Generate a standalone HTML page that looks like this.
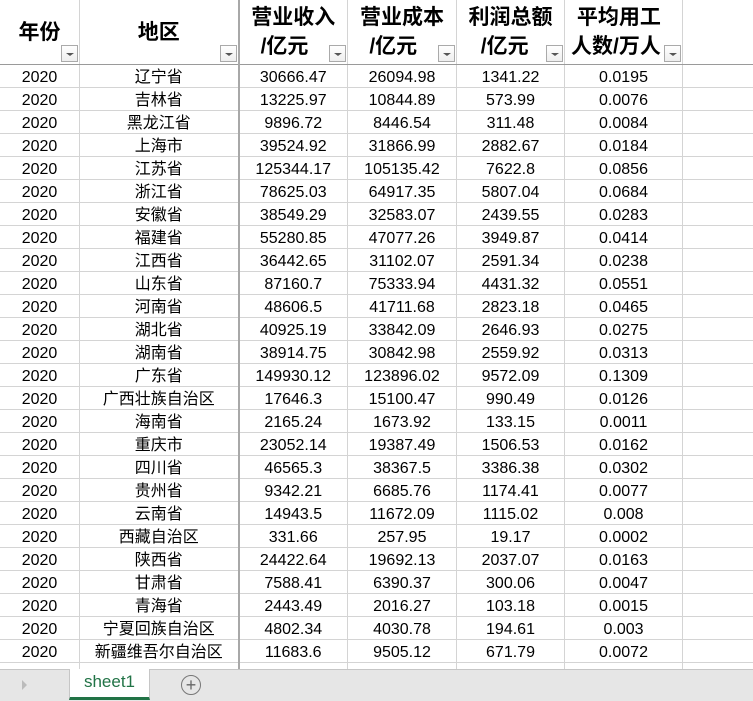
<!DOCTYPE html>
<html><head><meta charset="utf-8"><style>
body{margin:0;width:753px;height:700px;overflow:hidden;background:#fff;font-family:"Liberation Sans","Noto Sans CJK SC",sans-serif;position:relative}
table{border-collapse:collapse;table-layout:fixed;position:absolute;left:-1px;top:-1px;width:760px}
td{border:1px solid #d4d4d4;height:22px;padding:3px 0 0 0;box-sizing:border-box;text-align:center;font-size:16px;color:#000;white-space:nowrap;overflow:hidden;line-height:19px}
tr.d td{height:23px}
tr.h td{height:65px;padding:0;font-weight:bold;font-size:21px;line-height:29px;position:relative;border-bottom:1px solid #9a9a9a;vertical-align:middle}
td.b{border-right:2px solid #a8a8a8}
.f{position:absolute;right:1px;bottom:2px;width:17px;height:17px;border:1px solid #aaa;background:linear-gradient(#fff,#eee);box-sizing:border-box}
.f:after{content:"";position:absolute;left:4px;top:7px;border-left:4px solid transparent;border-right:4px solid transparent;border-top:3px solid #555}
.tabs{position:absolute;left:0;top:669px;width:753px;height:31px;background:#e6e6e6;border-top:1px solid #c6c6c6}
.tab{position:absolute;left:69px;top:-1px;width:79px;height:28px;background:#fff;border:1px solid #c6c6c6;border-top:none;border-bottom:3px solid #217346;color:#217346;font-size:17px;text-align:center;line-height:26px;box-sizing:content-box}
.plus{position:absolute;left:181px;top:5px;width:18px;height:18px;border:1.5px solid #777;border-radius:50%;color:#666;text-align:center;line-height:18px;font-size:18px}
.arr{position:absolute;left:22px;top:10px;border-top:5px solid transparent;border-bottom:5px solid transparent;border-left:5px solid #bbb}
</style></head><body>
<table>
<colgroup><col style="width:80px"><col style="width:159px"><col style="width:109px"><col style="width:109px"><col style="width:108px"><col style="width:118px"><col style="width:77px"></colgroup>
<tr class="h"><td>年份<div class="f"></div></td><td class="b">地区<div class="f"></div></td><td>营业收入<br>/亿元&nbsp;&nbsp;&nbsp;<div class="f"></div></td><td>营业成本<br>/亿元&nbsp;&nbsp;&nbsp;<div class="f"></div></td><td>利润总额<br>&nbsp;/亿元&nbsp;&nbsp;&nbsp;<div class="f"></div></td><td style="text-align:left;padding-left:6px">&nbsp;平均用工<br>人数/万人<div class="f"></div></td><td></td></tr>
<tr class="d"><td>2020</td><td class="b">辽宁省</td><td>30666.47</td><td>26094.98</td><td>1341.22</td><td>0.0195</td><td></td></tr>
<tr class="d"><td>2020</td><td class="b">吉林省</td><td>13225.97</td><td>10844.89</td><td>573.99</td><td>0.0076</td><td></td></tr>
<tr class="d"><td>2020</td><td class="b">黑龙江省</td><td>9896.72</td><td>8446.54</td><td>311.48</td><td>0.0084</td><td></td></tr>
<tr class="d"><td>2020</td><td class="b">上海市</td><td>39524.92</td><td>31866.99</td><td>2882.67</td><td>0.0184</td><td></td></tr>
<tr class="d"><td>2020</td><td class="b">江苏省</td><td>125344.17</td><td>105135.42</td><td>7622.8</td><td>0.0856</td><td></td></tr>
<tr class="d"><td>2020</td><td class="b">浙江省</td><td>78625.03</td><td>64917.35</td><td>5807.04</td><td>0.0684</td><td></td></tr>
<tr class="d"><td>2020</td><td class="b">安徽省</td><td>38549.29</td><td>32583.07</td><td>2439.55</td><td>0.0283</td><td></td></tr>
<tr class="d"><td>2020</td><td class="b">福建省</td><td>55280.85</td><td>47077.26</td><td>3949.87</td><td>0.0414</td><td></td></tr>
<tr class="d"><td>2020</td><td class="b">江西省</td><td>36442.65</td><td>31102.07</td><td>2591.34</td><td>0.0238</td><td></td></tr>
<tr class="d"><td>2020</td><td class="b">山东省</td><td>87160.7</td><td>75333.94</td><td>4431.32</td><td>0.0551</td><td></td></tr>
<tr class="d"><td>2020</td><td class="b">河南省</td><td>48606.5</td><td>41711.68</td><td>2823.18</td><td>0.0465</td><td></td></tr>
<tr class="d"><td>2020</td><td class="b">湖北省</td><td>40925.19</td><td>33842.09</td><td>2646.93</td><td>0.0275</td><td></td></tr>
<tr class="d"><td>2020</td><td class="b">湖南省</td><td>38914.75</td><td>30842.98</td><td>2559.92</td><td>0.0313</td><td></td></tr>
<tr class="d"><td>2020</td><td class="b">广东省</td><td>149930.12</td><td>123896.02</td><td>9572.09</td><td>0.1309</td><td></td></tr>
<tr class="d"><td>2020</td><td class="b">广西壮族自治区</td><td>17646.3</td><td>15100.47</td><td>990.49</td><td>0.0126</td><td></td></tr>
<tr class="d"><td>2020</td><td class="b">海南省</td><td>2165.24</td><td>1673.92</td><td>133.15</td><td>0.0011</td><td></td></tr>
<tr class="d"><td>2020</td><td class="b">重庆市</td><td>23052.14</td><td>19387.49</td><td>1506.53</td><td>0.0162</td><td></td></tr>
<tr class="d"><td>2020</td><td class="b">四川省</td><td>46565.3</td><td>38367.5</td><td>3386.38</td><td>0.0302</td><td></td></tr>
<tr class="d"><td>2020</td><td class="b">贵州省</td><td>9342.21</td><td>6685.76</td><td>1174.41</td><td>0.0077</td><td></td></tr>
<tr class="d"><td>2020</td><td class="b">云南省</td><td>14943.5</td><td>11672.09</td><td>1115.02</td><td>0.008</td><td></td></tr>
<tr class="d"><td>2020</td><td class="b">西藏自治区</td><td>331.66</td><td>257.95</td><td>19.17</td><td>0.0002</td><td></td></tr>
<tr class="d"><td>2020</td><td class="b">陕西省</td><td>24422.64</td><td>19692.13</td><td>2037.07</td><td>0.0163</td><td></td></tr>
<tr class="d"><td>2020</td><td class="b">甘肃省</td><td>7588.41</td><td>6390.37</td><td>300.06</td><td>0.0047</td><td></td></tr>
<tr class="d"><td>2020</td><td class="b">青海省</td><td>2443.49</td><td>2016.27</td><td>103.18</td><td>0.0015</td><td></td></tr>
<tr class="d"><td>2020</td><td class="b">宁夏回族自治区</td><td>4802.34</td><td>4030.78</td><td>194.61</td><td>0.003</td><td></td></tr>
<tr class="d"><td>2020</td><td class="b">新疆维吾尔自治区</td><td>11683.6</td><td>9505.12</td><td>671.79</td><td>0.0072</td><td></td></tr>
<tr class="d"><td></td><td class="b"></td><td></td><td></td><td></td><td></td><td></td></tr>
</table>
<div class="tabs"><div class="arr"></div><div class="tab">sheet1</div><div class="plus">+</div></div>
</body></html>
